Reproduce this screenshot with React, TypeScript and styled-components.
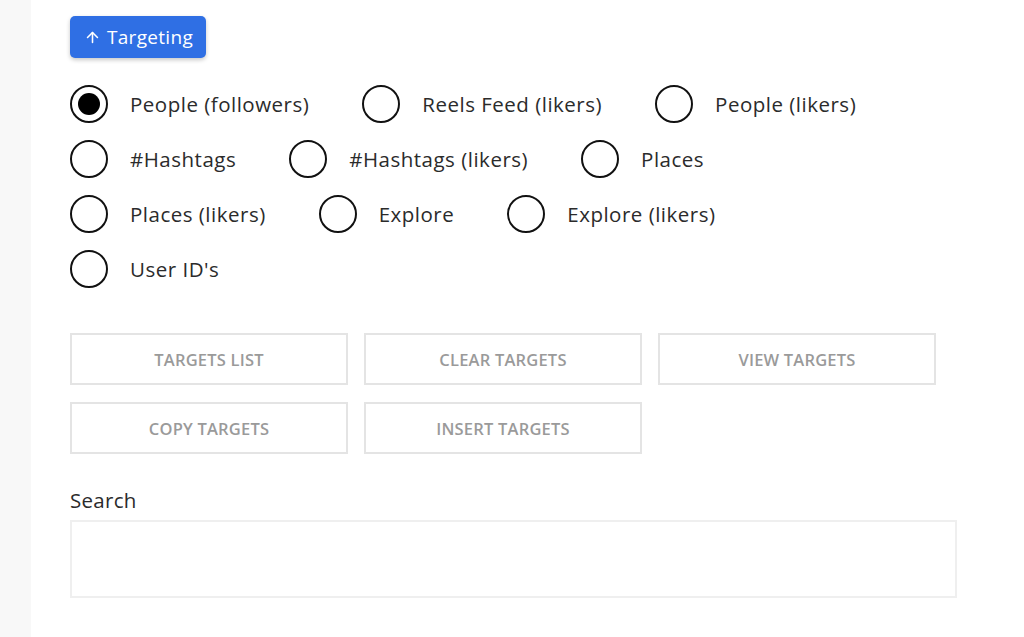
import React, { useState } from "react";
import styled, { createGlobalStyle } from "styled-components";
import { ArrowUp } from "lucide-react";

const Global = createGlobalStyle`
  html, body { margin: 0; padding: 0; background: #ffffff; }
  body { font-family: "Open Sans", "Noto Sans", sans-serif; color: #2b2b2b; }
  * { box-sizing: border-box; }
`;

const Page = styled.div`
  display: flex;
  min-height: 637px;
`;

const Sidebar = styled.aside`
  width: 31px;
  flex: none;
  background: #f8f8f8;
`;

const Main = styled.main`
  flex: 1;
  padding: 16px 0 0 39px;
`;

const Content = styled.div`
  width: 887px;
  display: flex;
  flex-direction: column;
  align-items: flex-start;
`;

const ToggleButton = styled.button`
  height: 42px;
  padding: 0 13px 0 14px;
  border: none;
  border-radius: 5px;
  background: #2f6fe4;
  color: #ffffff;
  font-family: inherit;
  font-size: 19px;
  letter-spacing: 0.3px;
  display: flex;
  align-items: center;
  gap: 6px;
  box-shadow: 0 2px 4px rgba(0, 0, 0, 0.22);
  cursor: pointer;
`;

const RadioGroup = styled.div`
  margin-top: 27px;
  display: flex;
  flex-wrap: wrap;
  row-gap: 17px;
  width: 100%;
`;

const RadioItem = styled.label`
  display: flex;
  align-items: center;
  gap: 22px;
  margin-right: 53px;
  height: 38px;
  font-size: 20.5px;
  letter-spacing: 0.5px;
  color: #2b2b2b;
  cursor: pointer;
`;

const RadioCircle = styled.span<{ $checked: boolean }>`
  width: 38px;
  height: 38px;
  border-radius: 50%;
  border: 2px solid #111;
  display: flex;
  align-items: center;
  justify-content: center;
  flex: none;
  &::after {
    content: "";
    width: 22px;
    height: 22px;
    border-radius: 50%;
    background: #000;
    display: ${(p) => (p.$checked ? "block" : "none")};
  }
`;

const ActionGrid = styled.div`
  margin-top: 45px;
  display: grid;
  grid-template-columns: repeat(3, 278px);
  column-gap: 16px;
  row-gap: 17px;
`;

const ActionButton = styled.button`
  height: 52px;
  background: #ffffff;
  border: 2px solid #e4e4e4;
  color: #9a9a9a;
  font-family: inherit;
  font-size: 16.5px;
  letter-spacing: 0.2px;
  font-weight: 600;
  text-transform: uppercase;
  cursor: pointer;
`;

const SearchLabel = styled.label`
  margin-top: 34px;
  font-size: 20.5px;
  letter-spacing: 0.3px;
  color: #2b2b2b;
  line-height: 24px;
`;

const SearchInput = styled.input`
  margin-top: 8px;
  width: 887px;
  height: 78px;
  border: 2px solid #efefef;
  outline: none;
  font-family: inherit;
  font-size: 18px;
  padding: 0 12px;
`;

const options = [
  "People (followers)",
  "Reels Feed (likers)",
  "People (likers)",
  "#Hashtags",
  "#Hashtags (likers)",
  "Places",
  "Places (likers)",
  "Explore",
  "Explore (likers)",
  "User ID's",
];

const actions = ["Targets list", "Clear targets", "View targets", "Copy targets", "Insert targets"];

export default function App() {
  const [selected, setSelected] = useState(options[0]);
  return (
    <>
      <Global />
      <Page>
        <Sidebar />
        <Main>
          <Content>
            <ToggleButton>
              <ArrowUp size={17} strokeWidth={2.2} />
              <span>Targeting</span>
            </ToggleButton>
            <RadioGroup>
              {options.map((o) => (
                <RadioItem key={o} onClick={() => setSelected(o)}>
                  <RadioCircle $checked={selected === o} />
                  <span>{o}</span>
                </RadioItem>
              ))}
            </RadioGroup>
            <ActionGrid>
              {actions.map((a) => (
                <ActionButton key={a}>{a}</ActionButton>
              ))}
            </ActionGrid>
            <SearchLabel>Search</SearchLabel>
            <SearchInput />
          </Content>
        </Main>
      </Page>
    </>
  );
}
